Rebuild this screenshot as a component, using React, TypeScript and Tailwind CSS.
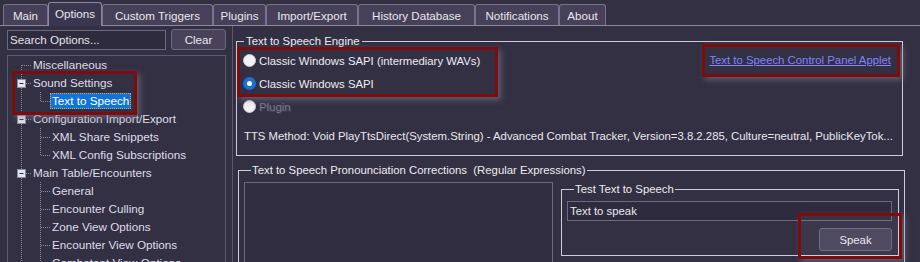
const tabs = [
  { label: "Main", w: "w-[45px]" },
  { label: "Options", w: "w-[54px]", active: true },
  { label: "Custom Triggers", w: "w-[111px]" },
  { label: "Plugins", w: "w-[53px]" },
  { label: "Import/Export", w: "w-[92px]" },
  { label: "History Database", w: "w-[117px]" },
  { label: "Notifications", w: "w-[84px]" },
  { label: "About", w: "w-[47px]" },
];

type Node = {
  text: string;
  level: 1 | 2;
  box?: boolean;
  first?: boolean;
  last?: boolean;
  selected?: boolean;
};

const tree: Node[] = [
  { text: "Miscellaneous", level: 1, first: true },
  { text: "Sound Settings", level: 1, box: true },
  { text: "Text to Speech", level: 2, last: true, selected: true },
  { text: "Configuration Import/Export", level: 1, box: true },
  { text: "XML Share Snippets", level: 2 },
  { text: "XML Config Subscriptions", level: 2, last: true },
  { text: "Main Table/Encounters", level: 1, box: true },
  { text: "General", level: 2 },
  { text: "Encounter Culling", level: 2 },
  { text: "Zone View Options", level: 2 },
  { text: "Encounter View Options", level: 2 },
  { text: "Combatant View Options", level: 2 },
];

const dot = { stroke: "#8c8a9c", strokeWidth: 1, strokeDasharray: "1 1" };

function Guides({ node }: { node: Node }) {
  const w = node.level === 1 ? 25 : 44;
  return (
    <svg width={w} height={18} className="shrink-0">
      <line x1={13.5} y1={node.first ? 9 : 0} x2={13.5} y2={18} {...dot} />
      {node.level === 1 && !node.box && <line x1={14} y1={9.5} x2={24} y2={9.5} {...dot} />}
      {node.level === 1 && node.box && (
        <>
          <line x1={18} y1={9.5} x2={24} y2={9.5} {...dot} />
          <rect x={9.5} y={5.5} width={8} height={8} fill="#e4e4ea" stroke="#8c8a9c" />
          <line x1={11.5} y1={9.5} x2={15.5} y2={9.5} stroke="#1c2f7a" strokeWidth={1} />
        </>
      )}
      {node.level === 2 && (
        <>
          <line x1={32.5} y1={0} x2={32.5} y2={node.last ? 9.5 : 18} {...dot} />
          <line x1={33} y1={9.5} x2={42} y2={9.5} {...dot} />
        </>
      )}
    </svg>
  );
}

function Radio({ checked, disabled, label }: { checked?: boolean; disabled?: boolean; label: string }) {
  return (
    <div className="h-[23px] flex items-center gap-[3px]">
      {checked ? (
        <span className="w-[13px] h-[13px] rounded-full bg-[#1d6fd1] flex items-center justify-center">
          <span className="w-[5px] h-[5px] rounded-full bg-white" />
        </span>
      ) : (
        <span className="w-[13px] h-[13px] rounded-full bg-[#f2f2f4] border border-[#c8c8d0]" />
      )}
      <span className={disabled ? "text-[#7a7790] [text-shadow:1px_1px_0_#4a465c]" : "text-[#ececf0]"}>{label}</span>
    </div>
  );
}

export default function App() {
  return (
    <div className="w-[920px] h-[262px] overflow-hidden relative bg-[#343044] text-[#e8e8ee] text-[11.35px] leading-[14px] font-['Liberation_Sans',Arial,sans-serif]">
      {/* Tabs */}
      <div className="h-[26px] flex items-end pl-[3px] border-b border-[#8d8a9c]">
        {tabs.map((t) => (
          <div
            key={t.label}
            className={
              t.active
                ? `${t.w} h-[24px] -mb-px flex items-center justify-center bg-[#3a3650] border border-b-0 border-[#8d8a9c] rounded-t-[3px] pb-[2px] text-[11.6px]`
                : `${t.w} h-[21px] flex items-center justify-center bg-[#464158] border border-b-0 border-[#77738a] rounded-t-[3px] pt-[1px] text-[11.6px]`
            }
          >
            {t.label}
          </div>
        ))}
      </div>

      <div className="flex">
        {/* Left options panel */}
        <div className="w-[233px] shrink-0 border-r border-[#5b5770] pl-[7px] pt-[3px] h-[240px]">
          <div className="flex items-center gap-[5px] h-[21px] text-[11.6px]">
            <div className="w-[159px] h-[20px] border border-[#6c687e] bg-[#2f2b3e] flex items-center pl-[2px] text-[#e4e4ea]">
              Search Options...
            </div>
            <div className="w-[55px] h-[21px] border border-[#6c687e] bg-[#48435a] rounded-[3px] flex items-center justify-center">
              Clear
            </div>
          </div>
          <div className="mt-[5px] w-[219px] h-[220px] border border-[#5d596e] text-[11.7px]">
            {tree.map((n) => (
              <div key={n.text} className="h-[18px] flex items-center text-[#dedde8]">
                <Guides node={n} />
                {n.selected ? (
                  <span className="-ml-[2px] px-[1px] h-[16px] flex items-center bg-[#0f74d6] text-white border border-dotted border-[#e8a040]">
                    {n.text}
                  </span>
                ) : (
                  <span className="whitespace-nowrap">{n.text}</span>
                )}
              </div>
            ))}
          </div>
        </div>

        {/* Right settings panel */}
        <div className="flex-1 min-w-0 pl-[3px]">
          <fieldset className="mt-[8px] w-[667px] min-w-0 h-[122px] border border-[#cfcdd8] px-[6px]">
            <legend className="ml-[1px] px-[2px] leading-[14px] text-[#ececf0]">Text to Speech Engine</legend>
            <div className="flex justify-between mt-[1px]">
              <div className="flex flex-col">
                <Radio label="Classic Windows SAPI (intermediary WAVs)" />
                <Radio checked label="Classic Windows SAPI" />
                <Radio disabled label="Plugin" />
              </div>
              <span className="mt-[4px] mr-[5px] text-[#8282ff] underline">Text to Speech Control Panel Applet</span>
            </div>
            <div className="mt-[11px] whitespace-nowrap overflow-hidden pl-[1px]">
              TTS Method: Void PlayTtsDirect(System.String) - Advanced Combat Tracker, Version=3.8.2.285, Culture=neutral, PublicKeyTok...
            </div>
          </fieldset>

          <fieldset className="mt-[7px] ml-[2px] w-[667px] min-w-0 h-[110px] border border-[#cfcdd8] pl-[5px] pr-[5px]">
            <legend className="ml-[7px] px-[1px] leading-[14px] text-[#ececf0] whitespace-pre">
              Text to Speech Pronounciation Corrections  (Regular Expressions)
            </legend>
            <div className="flex gap-[8px] mt-[5px]">
              <div className="w-[309px] h-[90px] border border-[#6c687e] bg-[#322e42]" />
              <fieldset className="w-[338px] min-w-0 h-[74px] border border-[#cfcdd8] pl-[5px] pr-[6px]">
                <legend className="ml-[7px] px-[1px] leading-[14px] text-[#ececf0]">Test Text to Speech</legend>
                <div className="mt-[5px] h-[20px] border border-[#6c687e] bg-[#2f2b3e] flex items-center pl-[2px]">
                  Text to speak
                </div>
                <div className="flex justify-end mt-[7px]">
                  <div className="w-[73px] h-[23px] border border-[#6c687e] bg-[#48435a] rounded-[3px] flex items-center justify-center">
                    Speak
                  </div>
                </div>
              </fieldset>
            </div>
          </fieldset>
        </div>
      </div>

      {/* Screenshot annotations */}
      <div className="absolute left-[12px] top-[71px] w-[125px] h-[44px] border-[3px] border-[#7e0c0c] shadow-[3px_3px_6px_rgba(130,128,145,0.55)]" />
      <div className="absolute left-[237px] top-[47px] w-[261px] h-[50px] border-[3px] border-[#7e0c0c] shadow-[3px_3px_6px_rgba(130,128,145,0.55)]" />
      <div className="absolute left-[702px] top-[44px] w-[198px] h-[33px] border-[3px] border-[#7e0c0c] shadow-[3px_3px_6px_rgba(130,128,145,0.55)]" />
      <div className="absolute left-[798px] top-[213px] w-[104px] h-[46px] border-[3px] border-[#7e0c0c] bg-[rgba(255,255,255,0.04)] shadow-[3px_3px_6px_rgba(130,128,145,0.55)]" />
    </div>
  );
}
